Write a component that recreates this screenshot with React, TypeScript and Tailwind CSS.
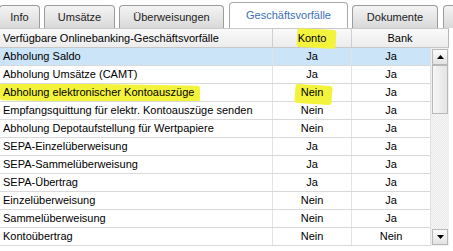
import React from "react";

const rows: { name: string; konto: string; bank: string; sel?: boolean; hl?: boolean }[] = [
  { name: "Abholung Saldo", konto: "Ja", bank: "Ja", sel: true },
  { name: "Abholung Umsätze (CAMT)", konto: "Ja", bank: "Ja" },
  { name: "Abholung elektronischer Kontoauszüge", konto: "Nein", bank: "Ja", hl: true },
  { name: "Empfangsquittung für elektr. Kontoauszüge senden", konto: "Nein", bank: "Ja" },
  { name: "Abholung Depotaufstellung für Wertpapiere", konto: "Nein", bank: "Ja" },
  { name: "SEPA-Einzelüberweisung", konto: "Ja", bank: "Ja" },
  { name: "SEPA-Sammelüberweisung", konto: "Ja", bank: "Ja" },
  { name: "SEPA-Übertrag", konto: "Ja", bank: "Ja" },
  { name: "Einzelüberweisung", konto: "Nein", bank: "Ja" },
  { name: "Sammelüberweisung", konto: "Nein", bank: "Ja" },
  { name: "Kontoübertrag", konto: "Nein", bank: "Nein" },
];

function Tab({ label, w, ml, active }: { label: string; w: string; ml: string; active?: boolean }) {
  if (active) {
    return (
      <div
        className={`${w} ${ml} h-[26px] shrink-0 rounded-t-[4px] border border-b-0 border-[#a9a9a9] bg-white flex items-center justify-center text-[#3d70b6]`}
      >
        {label}
      </div>
    );
  }
  return (
    <div
      className={`${w} ${ml} h-[23px] shrink-0 rounded-t-[4px] border border-b-0 border-[#9c9c9c] bg-gradient-to-b from-[#f4f4f4] to-[#d9d9d9] flex items-center justify-center text-[#222]`}
    >
      {label}
    </div>
  );
}

export default function App() {
  return (
    <div
      className="w-[453px] h-[251px] bg-white overflow-hidden text-[11px] leading-none text-black"
      style={{ fontFamily: '"Liberation Sans", Arial, sans-serif' }}
    >
      {/* tabs */}
      <div className="h-[28px] flex items-end">
        <Tab label="Info" w="w-[41px]" ml="-ml-[1px]" />
        <Tab label="Umsätze" w="w-[71px]" ml="ml-[4px]" />
        <Tab label="Überweisungen" w="w-[105px]" ml="ml-[4px]" />
        <Tab label="Geschäftsvorfälle" w="w-[119px]" ml="ml-[5px]" active />
        <Tab label="Dokumente" w="w-[86px]" ml="ml-[4px]" />
        <Tab label="" w="w-[20px]" ml="ml-[5px]" />
      </div>

      {/* header */}
      <div className="w-[449px] h-[20px] flex border-t border-b border-[#c8c8c8] bg-gradient-to-b from-[#fafafa] to-[#ececec]">
        <div className="w-[273px] flex items-center pl-[3px] border-r border-[#cfcfcf]">
          Verfügbare Onlinebanking-Geschäftsvorfälle
        </div>
        <div className="w-[79px] relative flex items-center justify-center border-r border-[#cfcfcf]">
          <span className="absolute left-[24px] top-[0px] w-[39px] h-[19px] bg-[#f3f33c] rotate-[3deg] rounded-[3px]" />
          <span className="relative">Konto</span>
        </div>
        <div className="flex-1 flex items-center justify-center border-r border-[#b9b9b9]">Bank</div>
      </div>

      {/* body */}
      <div className="flex w-[449px]">
        <div className="w-[430px]">
          {rows.map((r, i) => (
            <div
              key={i}
              className={`h-[18px] flex border-b border-[#d9d9d9] ${r.sel ? "bg-[#cbe4f8]" : "bg-white"}`}
            >
              <div className="w-[273px] relative flex items-center pl-[3px] border-r border-[#e3e3e3] whitespace-nowrap overflow-hidden">
                {r.hl && (
                  <span className="absolute left-0 top-[0px] w-[200px] h-[18px] bg-[#f3f33c] rotate-[1deg] rounded-[3px]" />
                )}
                <span className="relative">{r.name}</span>
              </div>
              <div className="w-[79px] relative flex items-center justify-center border-r border-[#e3e3e3]">
                {r.hl && (
                  <span className="absolute left-[22px] top-[1px] w-[37px] h-[19px] bg-[#f3f33c] rotate-[4deg] rounded-[3px]" />
                )}
                <span className="relative">{r.konto}</span>
              </div>
              <div className="flex-1 flex items-center justify-center">{r.bank}</div>
            </div>
          ))}
        </div>

        {/* scrollbar */}
        <div className="w-[19px] h-[198px] flex flex-col bg-[#f0f0f0] border-l border-[#e0e0e0]">
          <div className="h-[16px] mx-[1px] mt-[1px] border border-[#b8b8b8] bg-gradient-to-b from-[#fbfbfb] to-[#e3e3e3] flex items-center justify-center">
            <svg width="7" height="4" viewBox="0 0 7 4">
              <path d="M3.5 0 L7 4 L0 4 Z" fill="#000" />
            </svg>
          </div>
          <div className="h-[49px] mx-[1px] border border-[#b8b8b8] bg-gradient-to-r from-[#f6f6f6] to-[#e4e4e4]" />
          <div
            className="flex-1"
            style={{
              backgroundImage:
                "repeating-conic-gradient(#f7f7f7 0% 25%, #e9e9e9 0% 50%)",
              backgroundSize: "2px 2px",
            }}
          />
          <div className="h-[16px] mx-[1px] mb-[1px] border border-[#b8b8b8] bg-gradient-to-b from-[#fbfbfb] to-[#e3e3e3] flex items-center justify-center">
            <svg width="7" height="4" viewBox="0 0 7 4">
              <path d="M0 0 L7 0 L3.5 4 Z" fill="#000" />
            </svg>
          </div>
        </div>
      </div>
    </div>
  );
}
